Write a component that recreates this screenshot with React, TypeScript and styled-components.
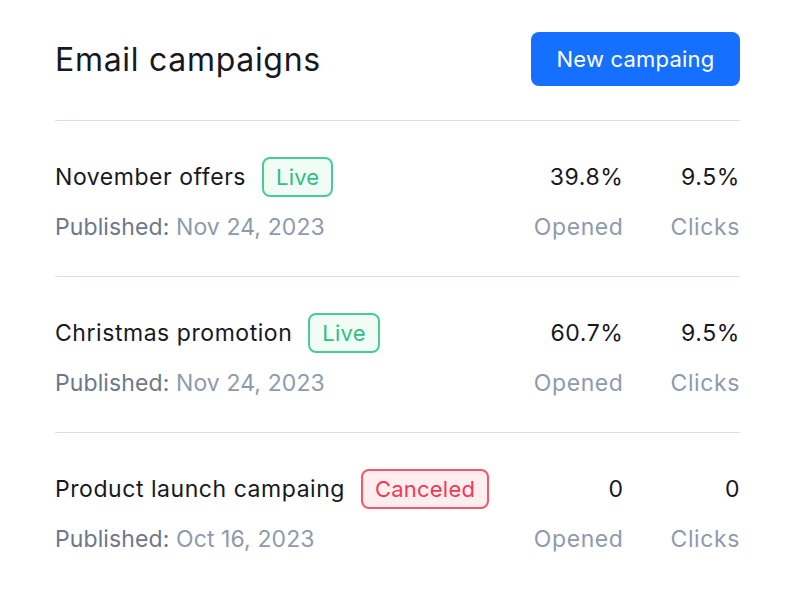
import React from "react";
import styled, { createGlobalStyle } from "styled-components";

const Global = createGlobalStyle`
  html, body { margin: 0; padding: 0; background: #ffffff; }
  body { font-family: Inter, "Noto Sans", sans-serif; color: #17191f; }
`;

const Page = styled.div`
  width: 794px;
  height: 612px;
  box-sizing: border-box;
  padding: 32px 54px 0 55px;
`;

const Header = styled.header`
  display: flex;
  align-items: center;
  justify-content: space-between;
  height: 54px;
  padding-bottom: 34px;
  border-bottom: 1.5px solid #d9dde8;
`;

const Title = styled.h1`
  margin: 0;
  font-size: 32px;
  font-weight: 400;
  letter-spacing: 0.7px;
  color: #17191f;
`;

const PrimaryButton = styled.button`
  height: 54px;
  width: 209px;
  border: none;
  border-radius: 8px;
  background: #1570ff;
  color: #ffffff;
  font-family: inherit;
  font-size: 22px;
  font-weight: 400;
  letter-spacing: 0.2px;
  cursor: pointer;
`;

const Row = styled.div<{ $last?: boolean }>`
  display: flex;
  justify-content: space-between;
  align-items: stretch;
  padding: 36px 0 29px;
  border-bottom: ${(p) => (p.$last ? "none" : "1.5px solid #d9dde8")};
`;

const Info = styled.div`
  display: flex;
  flex-direction: column;
  gap: 10px;
`;

const NameLine = styled.div`
  display: flex;
  align-items: center;
  gap: 16px;
  height: 40px;
`;

const Name = styled.span`
  font-size: 23px;
  letter-spacing: 0.55px;
  color: #17191f;
`;

const Badge = styled.span<{ $tone: "live" | "canceled" }>`
  display: inline-flex;
  align-items: center;
  height: 40px;
  box-sizing: border-box;
  padding: 0 12px;
  border-radius: 8px;
  font-size: 22px;
  letter-spacing: 0.2px;
  border: 2px solid ${(p) => (p.$tone === "live" ? "#45cd98" : "#f5566b")};
  background: ${(p) => (p.$tone === "live" ? "#f1fcf7" : "#ffeef0")};
  color: ${(p) => (p.$tone === "live" ? "#2fbf83" : "#f03a53")};
`;

const Published = styled.div`
  font-size: 23px;
  letter-spacing: 0.1px;
  height: 40px;
  line-height: 40px;
  color: #6e7888;
`;

const DateText = styled.span`
  color: #8f9bac;
`;

const Stats = styled.div`
  display: flex;
  gap: 47px;
`;

const Stat = styled.div`
  display: flex;
  flex-direction: column;
  align-items: flex-end;
  gap: 10px;
`;

const Value = styled.div`
  font-size: 23px;
  letter-spacing: 0.6px;
  height: 40px;
  line-height: 40px;
  color: #17191f;
`;

const Label = styled.div`
  font-size: 23px;
  letter-spacing: 0.6px;
  height: 40px;
  line-height: 40px;
  color: #8f9bac;
`;

type Campaign = {
  name: string;
  status: "live" | "canceled";
  date: string;
  opened: string;
  clicks: string;
};

const campaigns: Campaign[] = [
  { name: "November offers", status: "live", date: "Nov 24, 2023", opened: "39.8%", clicks: "9.5%" },
  { name: "Christmas promotion", status: "live", date: "Nov 24, 2023", opened: "60.7%", clicks: "9.5%" },
  { name: "Product launch campaing", status: "canceled", date: "Oct 16, 2023", opened: "0", clicks: "0" },
];

export default function App() {
  return (
    <>
      <Global />
      <Page>
        <Header>
          <Title>Email campaigns</Title>
          <PrimaryButton>New campaing</PrimaryButton>
        </Header>
        {campaigns.map((c, i) => (
          <Row key={c.name} $last={i === campaigns.length - 1}>
            <Info>
              <NameLine>
                <Name>{c.name}</Name>
                <Badge $tone={c.status}>{c.status === "live" ? "Live" : "Canceled"}</Badge>
              </NameLine>
              <Published>
                Published: <DateText>{c.date}</DateText>
              </Published>
            </Info>
            <Stats>
              <Stat>
                <Value>{c.opened}</Value>
                <Label>Opened</Label>
              </Stat>
              <Stat>
                <Value>{c.clicks}</Value>
                <Label>Clicks</Label>
              </Stat>
            </Stats>
          </Row>
        ))}
      </Page>
    </>
  );
}
